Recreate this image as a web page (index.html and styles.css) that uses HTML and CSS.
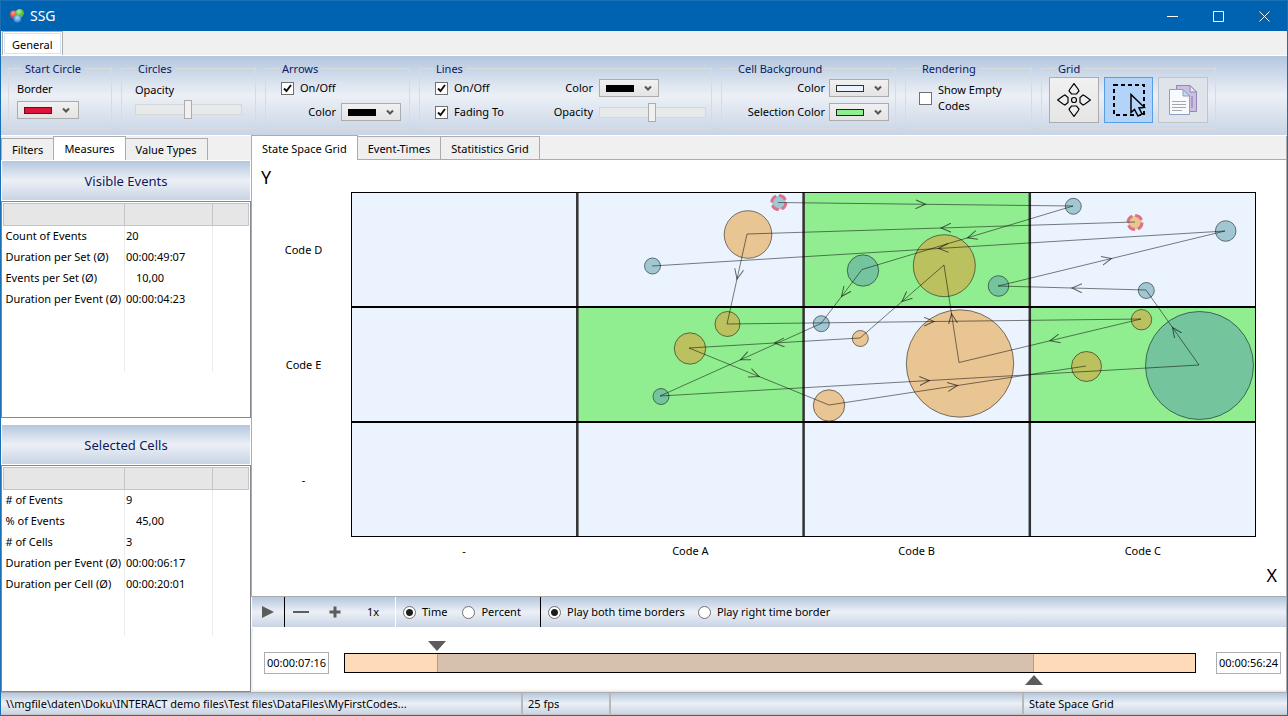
FILE: index.html
```html
<!DOCTYPE html>
<html lang="en">
<head>
<meta charset="utf-8">
<title>SSG</title>
<link rel="stylesheet" href="styles.css">
</head>
<body>
<div class="window">
  <header class="titlebar">
    <svg class="app-icon" viewBox="0 0 14 14" aria-hidden="true">
      <defs>
        <radialGradient id="ballGreen" cx=".4" cy=".3"><stop offset="0" stop-color="#b5ef8e"/><stop offset="1" stop-color="#5db83c"/></radialGradient>
        <radialGradient id="ballRed" cx=".4" cy=".3"><stop offset="0" stop-color="#ffa088"/><stop offset="1" stop-color="#e2452b"/></radialGradient>
        <radialGradient id="ballBlue" cx=".5" cy=".4"><stop offset="0" stop-color="#b9dcff"/><stop offset="1" stop-color="#3f8fe0"/></radialGradient>
      </defs>
      <circle cx="4" cy="5.500" r="3.900" fill="url(#ballRed)"/>
      <circle cx="9.700" cy="4.300" r="4.200" fill="url(#ballGreen)"/>
      <circle cx="7.300" cy="9.600" r="3.900" fill="url(#ballBlue)"/>
    </svg>
    <h1 class="app-title">SSG</h1>
    <div class="window-buttons">
      <button class="window-button" aria-label="Minimize"><svg viewBox="0 0 11 11"><path d="M0 5.500H11"/></svg></button>
      <button class="window-button" aria-label="Maximize"><svg viewBox="0 0 11 11"><path d="M.5 .5H10.500V10.500H.5Z"/></svg></button>
      <button class="window-button" aria-label="Close"><svg viewBox="0 0 11 11"><path d="M.5 .5L10.500 10.500M10.500 .5L.5 10.500"/></svg></button>
    </div>
  </header>

  <nav class="menu-tabs" role="tablist">
    <button class="menu-tab" role="tab" aria-selected="true">General</button>
  </nav>

  <section class="ribbon">
    <fieldset class="group start-circle">
      <legend>Start Circle</legend>
      <label for="border-color">Border</label>
      <select class="color-select crimson" id="border-color"><option aria-label="Crimson"></option></select>
    </fieldset>
    <fieldset class="group circles">
      <legend>Circles</legend>
      <label for="circle-opacity">Opacity</label>
      <input class="slider" id="circle-opacity" type="range" min="0" max="100" value="49">
    </fieldset>
    <fieldset class="group arrows">
      <legend>Arrows</legend>
      <label class="check"><input type="checkbox" checked>On/Off</label>
      <div class="field">
        <label for="arrow-color">Color</label>
        <select class="color-select black" id="arrow-color"><option aria-label="Black"></option></select>
      </div>
    </fieldset>
    <fieldset class="group lines">
      <legend>Lines</legend>
      <label class="check"><input type="checkbox" checked>On/Off</label>
      <label class="label-end" for="line-color">Color</label>
      <select class="color-select black" id="line-color"><option aria-label="Black"></option></select>
      <label class="check"><input type="checkbox" checked>Fading To</label>
      <label class="label-end" for="line-opacity">Opacity</label>
      <input class="slider" id="line-opacity" type="range" min="0" max="100" value="49">
    </fieldset>
    <fieldset class="group background">
      <legend>Cell Background</legend>
      <label class="label-end" for="cell-color">Color</label>
      <select class="color-select alice" id="cell-color"><option aria-label="Alice blue"></option></select>
      <label class="label-end" for="selection-color">Selection Color</label>
      <select class="color-select green" id="selection-color"><option aria-label="Light green"></option></select>
    </fieldset>
    <fieldset class="group rendering">
      <legend>Rendering</legend>
      <label class="check"><input type="checkbox">Show Empty Codes</label>
    </fieldset>
    <fieldset class="group grid-tools">
      <legend>Grid</legend>
      <button class="tool" aria-label="Move">
        <svg viewBox="0 0 34 34" fill="#eef0ee" stroke="#000" stroke-width="1.200">
          <path id="petal" d="M17 0.600L21 6L22 8L19.500 11H14.500L12 8L13 6Z"/>
          <use href="#petal" transform="rotate(90 17 17)"/>
          <use href="#petal" transform="rotate(180 17 17)"/>
          <use href="#petal" transform="rotate(270 17 17)"/>
          <circle cx="17" cy="17" r="2.500"/>
        </svg>
      </button>
      <button class="tool active" aria-label="Select" aria-pressed="true">
        <svg viewBox="0 0 34 34" fill="none" stroke="#000">
          <path stroke-width="2" stroke-dasharray="4 3" d="M2 2H32V32H2Z"/>
          <path fill="#b5d5f8" stroke-width="1.500" d="M19 11.500V29.500L22.500 26.500L26 33L30 31L27 25L32.500 24.500Z"/>
          <path stroke-width="1.500" d="M30 31L33 30"/>
        </svg>
      </button>
      <button class="tool disabled" aria-label="Copy" disabled>
        <svg viewBox="0 0 34 34">
          <path fill="#cbbfe0" stroke="#9484b8" d="M10.500 2.500H24L30.500 9V28.500H10.500Z"/>
          <path fill="#dfe9f5" stroke="#9484b8" d="M24 2.500V9H30.500Z"/>
          <path fill="none" stroke="#a99acb" stroke-width="2" d="M26 13V25"/>
          <path fill="#f8fafd" stroke="#8ba0c4" d="M3.500 6.500H17L23.500 13V31.500H3.500Z"/>
          <path fill="#c4dbf2" stroke="#8ba0c4" d="M17 6.500V13H23.500Z"/>
          <path fill="none" stroke="#a4a8ae" d="M6 18.500H20M6 21.500H20M6 24.500H20M6 27.500H16"/>
        </svg>
      </button>
    </fieldset>
  </section>

  <main class="workspace">
    <aside class="sidebar">
      <nav class="tabs" role="tablist">
        <button class="tab" role="tab">Filters</button>
        <button class="tab current" role="tab" aria-selected="true">Measures</button>
        <button class="tab" role="tab">Value Types</button>
      </nav>
      <h2 class="banner">Visible Events</h2>
      <div class="panel">
        <table class="measures">
          <thead><tr><th class="name-col"></th><th class="value-col"></th><th></th></tr></thead>
          <tbody>
            <tr><td>Count of Events</td><td>20</td><td></td></tr>
            <tr><td>Duration per Set (Ø)</td><td>00:00:49:07</td><td></td></tr>
            <tr><td>Events per Set (Ø)</td><td class="decimal">10,00</td><td></td></tr>
            <tr><td>Duration per Event (Ø)</td><td>00:00:04:23</td><td></td></tr>
            <tr class="filler tall"><td></td><td></td><td></td></tr>
          </tbody>
        </table>
      </div>
      <h2 class="banner second">Selected Cells</h2>
      <div class="panel last">
        <table class="measures">
          <thead><tr><th class="name-col"></th><th class="value-col"></th><th></th></tr></thead>
          <tbody>
            <tr><td># of Events</td><td>9</td><td></td></tr>
            <tr><td>% of Events</td><td class="decimal">45,00</td><td></td></tr>
            <tr><td># of Cells</td><td>3</td><td></td></tr>
            <tr><td>Duration per Event (Ø)</td><td>00:00:06:17</td><td></td></tr>
            <tr><td>Duration per Cell (Ø)</td><td>00:00:20:01</td><td></td></tr>
            <tr class="filler"><td></td><td></td><td></td></tr>
          </tbody>
        </table>
      </div>
    </aside>

    <section class="content">
      <nav class="tabs" role="tablist">
        <button class="tab current" role="tab" aria-selected="true">State Space Grid</button>
        <button class="tab" role="tab">Event-Times</button>
        <button class="tab" role="tab">Statitistics Grid</button>
      </nav>

      <div class="chart">
        <div class="axis-name y-name">Y</div>
        <div class="y-labels"><span>Code D</span><span>Code E</span><span>-</span></div>
        <svg class="plot" viewBox="351 192 905 345" role="img" aria-label="State space grid">
          <defs>
            <marker id="arrow" viewBox="-10 -5 12 10" markerWidth="12" markerHeight="10" refX="0" refY="0" orient="auto" markerUnits="userSpaceOnUse">
              <path d="M-10 -4.500L0 0L-10 4.500" fill="none" stroke="#000" stroke-opacity=".6"/>
            </marker>
          </defs>
          <rect class="cell" x="351" y="192" width="905" height="345"/>
          <rect class="selected" x="804" y="192" width="226" height="115"/>
          <rect class="selected" x="578" y="307" width="226" height="115"/>
          <rect class="selected" x="1030" y="307" width="226" height="115"/>
          <path class="col-lines" d="M577.300 192V537M803.600 192V537M1029.800 192V537"/>
          <path class="row-lines" d="M351 307H1256M351 422H1256"/>
          <rect class="frame" x="351.500" y="192.500" width="904" height="344"/>
          <g class="event blue">
            <circle cx="652.500" cy="266" r="8"/>
            <circle cx="1073.300" cy="206.300" r="8"/>
            <circle cx="1225.700" cy="231" r="10.300"/>
            <circle cx="1146.300" cy="290.500" r="8"/>
            <circle cx="821.300" cy="323.700" r="8"/>
          </g>
          <g class="event teal">
            <circle cx="863" cy="270.500" r="15.700"/>
            <circle cx="998.500" cy="286" r="10.300"/>
            <circle cx="661" cy="396.500" r="8"/>
            <circle cx="1199.500" cy="365.500" r="54"/>
          </g>
          <g class="event orange">
            <circle cx="748" cy="234.500" r="23.800"/>
            <circle cx="860.300" cy="338.500" r="8"/>
            <circle cx="960" cy="363.500" r="53.700"/>
            <circle cx="829" cy="405.500" r="15.700"/>
          </g>
          <g class="event olive">
            <circle cx="727.500" cy="324" r="12.500"/>
            <circle cx="690" cy="348.500" r="15.700"/>
            <circle cx="944.300" cy="265.700" r="31"/>
            <circle cx="1141.500" cy="319.700" r="10.200"/>
            <circle cx="1086.500" cy="366.500" r="15"/>
          </g>
          <g class="start">
            <circle class="start-blue" cx="778.800" cy="202.500" r="7"/>
            <circle class="start-orange" cx="1135" cy="222.500" r="7"/>
          </g>
          <g class="path">
            <polyline points="778,202.500 925.500,204.300 1073,206"/>
            <polyline points="1073,206 967.500,237.800 862,269.500"/>
            <polyline points="862,269.500 841.500,296.500 821,323.500"/>
            <polyline points="821,323.500 740.500,359.800 660,396"/>
            <polyline points="660,396 929.500,380.500 1199,365"/>
            <polyline points="1199,365 1172.500,327.500 1146,290"/>
            <polyline points="1146,290 1072,288 998,286"/>
            <polyline points="998,286 1111.500,258.500 1225,231"/>
            <polyline points="1225,231 938.500,248.500 652,266"/>
            <polyline points="1135,222 941,228 747,234"/>
            <polyline points="747,234 737,279 727,324"/>
            <polyline points="727,324 934,321.500 1141,319"/>
            <polyline points="1141,319 1050,340.800 959,362.500"/>
            <polyline points="959,362.500 951.500,313.800 944,265"/>
            <polyline points="944,265 902,301.500 860,338"/>
            <polyline points="860,338 774.500,343 689,348"/>
            <polyline points="689,348 759,376.500 829,405"/>
            <polyline points="829,405 957.500,385.500 1086,366"/>
          </g>
        </svg>
        <div class="x-labels"><span>-</span><span>Code A</span><span>Code B</span><span>Code C</span></div>
        <div class="axis-name x-name">X</div>
      </div>

      <div class="player">
        <button class="player-button play" aria-label="Play"><svg viewBox="0 0 12 12"><path d="M0 0L12 6L0 12Z"/></svg></button>
        <div class="speed">
          <button class="player-button" aria-label="Slower"><svg class="minus" viewBox="0 0 16 12"><path d="M0 5H16V7H0Z"/></svg></button>
          <button class="player-button" aria-label="Faster"><svg viewBox="0 0 12 12"><path d="M4.500 0.500H7.500V4.500H11.500V7.500H7.500V11.500H4.500V7.500H.5V4.500H4.500Z"/></svg></button>
          <output class="rate">1x</output>
        </div>
        <div class="radios unit">
          <label class="radio"><input type="radio" name="unit" checked>Time</label>
          <label class="radio"><input type="radio" name="unit">Percent</label>
        </div>
        <div class="radios borders">
          <label class="radio"><input type="radio" name="borders" checked>Play both time borders</label>
          <label class="radio"><input type="radio" name="borders">Play right time border</label>
        </div>
      </div>

      <div class="timeline">
        <input class="time" type="text" value="00:00:07:16" aria-label="Start time">
        <div class="track">
          <div class="range" style="left:10.800%;width:70.300%">
            <svg class="handle handle-start" viewBox="0 0 18 10"><path d="M0 0H18L9 10Z"/></svg>
            <svg class="handle handle-end" viewBox="0 0 18 10"><path d="M0 10H18L9 0Z"/></svg>
          </div>
        </div>
        <input class="time" type="text" value="00:00:56:24" aria-label="End time">
      </div>
    </section>
  </main>

  <footer class="status">
    <span class="status-file">\\mgfile\daten\Doku\INTERACT demo files\Test files\DataFiles\MyFirstCodes...</span>
    <span class="status-fps">25 fps</span>
    <span class="status-free"></span>
    <span class="status-view">State Space Grid</span>
  </footer>
</div>
</body>
</html>
```

FILE: styles.css
```css
:root {
  --steel: linear-gradient(#b4c7df, #ecf0f6 50%, #c8d4e5);
  --navy: #0c1a5c;
  --line: #acacac;
}

* { box-sizing: border-box; }

body {
  margin: 0;
  font: 11px/16px "Noto Sans", "Open Sans", sans-serif;
  color: #000;
}

button, input, select { font: inherit; color: inherit; margin: 0; }
button { padding: 0; border: 0; background: none; }
h1, h2 { margin: 0; font-weight: 400; }
svg { display: block; }

.window {
  display: flex;
  flex-direction: column;
  min-height: 100vh;
  border: solid #1a6fb5;
  border-width: 0 1px 1px;
  background: #fff;
}

/* Title bar */
.titlebar {
  display: flex;
  align-items: center;
  height: 31px;
  padding-left: 9px;
  border-top: 1px solid #1a6fb5;
  background: #0063b1;
  color: #fff;
}
.app-icon { width: 14px; height: 14px; }
.app-title { margin-left: 6px; font-size: 14px; line-height: 20px; }
.window-buttons { display: flex; margin-left: auto; }
.window-button { display: grid; place-items: center; width: 46px; height: 30px; }
.window-button svg { width: 11px; height: 11px; fill: none; stroke: #fff; }

/* Ribbon */
.menu-tabs { height: 25px; padding-left: 1px; background: #f0f0f0; border-bottom: 1px solid #fff; }
.menu-tab {
  height: 24px;
  padding: 3px 9px 0;
  border: 1px solid var(--line);
  border-bottom: 0;
  background: #fff;
  box-shadow: inset 0 0 0 1px #fff, inset 0 0 0 2px #d5e3f3;
}
.ribbon {
  display: flex;
  gap: 9px;
  height: 80px;
  padding: 4px 7px 7px;
  background: var(--steel);
  border-bottom: 1px solid #fff;
}
.group { position: relative; margin: 0; padding: 16px 8px 0; border: 0; min-width: 0; height: 69px; }
.group::before {
  content: "";
  position: absolute;
  inset: 8px 0 0;
  border: 1px solid #d8dadd;
  pointer-events: none;
}
.group legend {
  position: absolute;
  top: 1px;
  left: 14px;
  padding: 0 3px;
  background: linear-gradient(#bbcce2, #d1dceb);
  color: var(--navy);
}
.start-circle { width: 104px; display: flex; flex-direction: column; gap: 4px; align-items: flex-start; padding: 21px 9px 0; }
.circles { width: 135px; display: flex; flex-direction: column; gap: 2px; padding: 22px 14px 0; }
.arrows { width: 145px; display: flex; flex-direction: column; gap: 7px; padding: 20px 9px 0 16px; }
.field { display: flex; align-items: center; justify-content: flex-end; gap: 5px; }
.lines {
  width: 293px;
  display: grid;
  grid-template-columns: 1fr auto auto;
  grid-auto-rows: 18px;
  gap: 6px;
  align-items: center;
  padding: 19px 6px 0 16px;
}
.background {
  width: 175px;
  display: grid;
  grid-template-columns: 1fr auto;
  grid-auto-rows: 18px;
  gap: 6px 4px;
  align-items: center;
  padding: 19px 7px 0 6px;
}
.rendering { width: 127px; padding: 22px 14px 0; }
.grid-tools { width: 175px; display: flex; gap: 5px; padding: 17px 8px 0; }
.label-end { text-align: right; }

.color-select {
  appearance: none;
  --swatch: #000;
  --edge: #000;
  width: 60px;
  height: 18px;
  border: 1px solid var(--line);
  border-radius: 0;
  background:
    url("data:image/svg+xml,%3Csvg xmlns='http://www.w3.org/2000/svg' viewBox='0 0 8 7'%3E%3Cpath d='M1 1.500L4 4.500L7 1.500' fill='none' stroke='%23555' stroke-width='2'/%3E%3C/svg%3E") 44px 5px / 8px 7px no-repeat,
    linear-gradient(var(--swatch), var(--swatch)) 7px 6px / 26px 5px no-repeat,
    linear-gradient(var(--edge), var(--edge)) 6px 5px / 28px 7px no-repeat,
    linear-gradient(#f1f1f1, #e4e4e4);
}
.start-circle .color-select { width: 62px; }
.color-select.crimson { --swatch: #dc143c; --edge: #6e0a1e; }
.color-select.alice { --swatch: #ebf3fe; --edge: #333; }
.color-select.green { --swatch: #90ee90; --edge: #222; }

.slider { appearance: none; width: 107px; height: 18px; background: none; }
.slider::-webkit-slider-runnable-track { height: 11px; border: 1px solid #d6d6d6; background: #e7eaea; }
.slider::-webkit-slider-thumb {
  appearance: none;
  width: 8px;
  height: 19px;
  margin-top: -5px;
  border: 1px solid var(--line);
  background: #f0f0f0;
}

.check { display: flex; align-items: center; gap: 6px; }
.check input {
  appearance: none;
  flex: none;
  width: 13px;
  height: 13px;
  border: 1px solid #707070;
  background: #fff;
}
.check input:checked {
  background: #fff url("data:image/svg+xml,%3Csvg xmlns='http://www.w3.org/2000/svg' viewBox='0 0 11 11'%3E%3Cpath d='M2 5.500L4.500 8L9 2' fill='none' stroke='%23111' stroke-width='2'/%3E%3C/svg%3E") center / 11px 11px no-repeat;
}

.tool {
  display: grid;
  place-items: center;
  width: 50px;
  height: 46px;
  border: 1px solid var(--line);
  background: linear-gradient(#f1f1f1, #e5e5e5);
}
.tool svg { width: 34px; height: 34px; }
.tool.active { border-color: #569de5; background: #b3d4f8; }
.tool.disabled { border-color: #c1c5ca; background: #dfe4eb; }

/* Tabs */
.workspace { flex: 1; display: flex; }
.tabs { display: flex; align-items: flex-end; height: 25px; padding-left: 1px; background: #f0f0f0; }
.tab {
  height: 22px;
  margin-left: -1px;
  border: 1px solid var(--line);
  border-bottom: 0;
  background: #efefef;
}
.tab.current { height: 24px; background: #fff; }

/* Left column */
.sidebar { display: flex; flex-direction: column; width: 250px; }
.sidebar .tabs { border-bottom: 1px solid #fff; }
.sidebar .tab { padding: 1px 10px 0; }
.banner {
  height: 40px;
  border: 1px solid #fff;
  border-top: 0;
  background: var(--steel);
  color: var(--navy);
  font-size: 13px;
  line-height: 40px;
  text-align: center;
}
.banner.second { margin-top: 7px; }
.panel { height: 217px; padding: 1px; border: 1px solid #828790; }
.panel.last { flex: 1; height: auto; }

.measures { width: 100%; border-collapse: collapse; table-layout: fixed; }
.measures th { height: 22px; padding: 0; border: 1px solid #c4c4c4; background: #e6e6e6; }
.name-col { width: 121px; }
.value-col { width: 88px; }
.measures td { height: 21px; padding: 0 1px 0 2px; border-right: 1px solid #ececec; white-space: nowrap; }
.measures td:last-child { border-right: 0; }
.measures td + td { padding-left: 1px; }
.measures td.decimal { padding-left: 11px; }
.measures .filler td { height: 41px; }
.measures .tall td { height: 62px; }

/* State space grid */
.content { flex: 1; min-width: 0; display: flex; flex-direction: column; border-right: 1px solid var(--line); }
.content .tabs { height: 24px; border-bottom: 1px solid var(--line); }
.content .tab { height: 23px; padding: 1px 10px 0; }
.content .tab.current { height: 25px; margin-bottom: -1px; }
.chart {
  flex: 1;
  display: grid;
  grid-template-columns: 99px 1fr 30px;
  grid-template-rows: 32px auto 27px 1fr;
  border-left: 1px solid var(--line);
  border-bottom: 1px solid var(--line);
}
.axis-name { font-size: 18px; line-height: 24px; }
.y-name { grid-column: 1 / -1; padding: 5px 0 0 9px; }
.y-labels { display: grid; grid-template-rows: repeat(3, 1fr); place-items: center; padding-left: 4px; }
.plot { width: 100%; height: auto; }
.x-labels { grid-column: 2; display: grid; grid-template-columns: repeat(4, 1fr); place-items: center; }
.x-name { grid-column: 1 / -1; padding-right: 9px; line-height: 22px; text-align: right; }

.cell { fill: #ebf3fe; }
.selected { fill: #90ee90; }
.frame { fill: none; stroke: #000; }
.row-lines { stroke: #000; stroke-width: 2; }
.col-lines { stroke: #333; stroke-width: 2.500; }
.event { stroke: #000; stroke-opacity: .5; }
.blue { fill: #a1c7d3; }
.teal { fill: #74c49e; }
.orange { fill: #e9c594; }
.olive { fill: #bac15e; }
.start { stroke: #e0708a; stroke-width: 3; stroke-dasharray: 8 3; }
.start-blue { fill: #a1c7d3; }
.start-orange { fill: #e9c594; }
.path { fill: none; stroke: #000; stroke-opacity: .5; }
.path polyline { marker-mid: url(#arrow); }

/* Player */
.player { display: flex; height: 31px; border: solid #fff; border-width: 0 0 1px 1px; background: var(--steel); }
.player-button { display: grid; place-items: center; }
.player-button svg { width: 12px; height: 12px; fill: #5c5c5c; }
.player-button .minus { width: 16px; }
.play { width: 32px; }
.speed { display: flex; align-items: center; gap: 20px; width: 111px; padding-left: 8px; border-left: 1px solid #000; }
.rate { margin-left: 6px; }
.radios { display: flex; align-items: center; padding-left: 7px; border-left: 1px solid #fff; }
.unit { width: 145px; gap: 15px; }
.borders { gap: 13px; border-left-color: #000; }
.radio { display: flex; align-items: center; gap: 6px; }
.radio input {
  appearance: none;
  width: 13px;
  height: 13px;
  border: 1px solid #707070;
  border-radius: 50%;
  background: #fff;
}
.radio input:checked { background: radial-gradient(circle, #1e1e1e 3px, #fff 4px); }

/* Timeline */
.timeline {
  display: flex;
  align-items: center;
  gap: 15px;
  height: 64px;
  padding: 5px 5px 0 11px;
  border-left: 2px solid #f0f0f0;
  box-shadow: inset 0 -4px 3px -3px #ddd;
}
.time { width: 65px; height: 22px; padding: 0 1px; border: 1px solid #abadb3; text-align: center; background: #fff; }
.track { position: relative; flex: 1; height: 20px; margin-right: 5px; border: 1px solid #000; background: #ffdab9; }
.range { position: absolute; top: 0; bottom: 0; border: solid #b39c89; border-width: 0 1px; background: #d6c0ae; }
.handle { position: absolute; width: 18px; height: 10px; fill: #5c5c5c; }
.handle-start { left: -10px; top: -13px; }
.handle-end { right: -10px; bottom: -13px; }

/* Status bar */
.status {
  display: flex;
  height: 23px;
  border-top: 1px solid var(--line);
  border-bottom: 1px solid #c4c4c4;
  background: var(--steel);
  line-height: 22px;
}
.status span { padding-left: 5px; white-space: nowrap; }
.status span + span { border-left: 2px solid #b8b8b8; }
.status-file { width: 520px; }
.status-fps { width: 88px; }
.status-free { flex: 1; }
.status-view { width: 265px; }
```
